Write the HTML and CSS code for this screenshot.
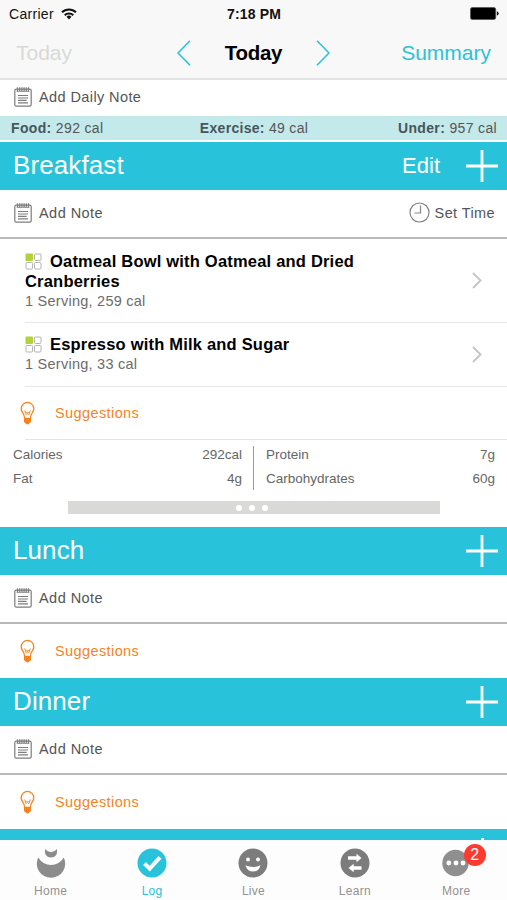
FILE: index.html
```html
<!DOCTYPE html>
<html lang="en">
<head>
<meta charset="utf-8">
<title>Food Log</title>
<link rel="stylesheet" href="styles.css">
</head>
<body>
<svg class="defs" aria-hidden="true">
  <symbol id="note" viewBox="0 0 18 20">
    <rect x=".8" y="2.2" width="16.4" height="17" rx="1.6" fill="none" stroke="currentColor" stroke-width="1.2"/>
    <path d="M2.6 4.3h12.8" stroke="currentColor" stroke-width=".9"/>
    <path d="M3.5.3v4M5.7.3v4M7.9.3v4M10.1.3v4M12.3.3v4M14.5.3v4" stroke="currentColor" stroke-width="1.2"/>
    <path d="M4 8.5h10M4 11h10M4 13.4h8.6M4 15.8h10" stroke="currentColor" stroke-width="1.2"/>
  </symbol>
  <symbol id="bulb" viewBox="0 0 15 24">
    <path d="M4.600 17.500C4.600 14.500 3.900 13.600 2.600 11.700A6.300 6.300 0 1 1 12.400 11.700C11.100 13.600 10.400 14.500 10.400 17.500z" fill="none" stroke="currentColor" stroke-width="1.300"/>
    <path d="M4.700 9.500l1.600 4.500M10.300 9.500l-1.600 4.500M6.600 11l.9 1.700.9-1.700" fill="none" stroke="currentColor" stroke-width="1"/>
    <path d="M4 17h7v3.700q0 1-1.300 1.400-.5 1.300-2.200 1.300t-2.200-1.300Q4 21.700 4 20.700z" fill="currentColor"/>
  </symbol>
  <symbol id="plus" viewBox="0 0 32 32">
    <path d="M0 16h32M16 0v32" stroke="currentColor" stroke-width="2.800"/>
  </symbol>
  <symbol id="squares" viewBox="0 0 17 17">
    <rect x=".5" y=".5" width="7.500" height="7.500" rx="1" fill="#b2d235"/>
    <g fill="none" stroke="#b4b4b4"><rect x="9.500" y="1" width="6.500" height="6.500" rx="1"/><rect x="1" y="9.500" width="6.500" height="6.500" rx="1"/><rect x="9.500" y="9.500" width="6.500" height="6.500" rx="1"/></g>
  </symbol>
  <symbol id="chevron" viewBox="0 0 10 17">
    <path d="M1 1l7.600 7.500L1 16" fill="none" stroke="currentColor" stroke-width="1.800"/>
  </symbol>
</svg>
<div class="screen">
  <header class="top">
    <div class="status">
      <div class="carrier"><span>Carrier</span>
        <svg width="16" height="12" viewBox="0 0 16 12"><g fill="none" stroke="#111" stroke-width="2"><path d="M1 4.300a10 10 0 0 1 14 0"/><path d="M3.700 7.200a6.100 6.100 0 0 1 8.600 0"/></g><path d="M5.500 8.800a3.500 3.500 0 0 1 5 0L8 11.500z" fill="#111"/></svg>
      </div>
      <b class="clock">7:18 PM</b>
      <svg class="battery" width="29" height="13" viewBox="0 0 31 13" preserveAspectRatio="none"><rect x=".5" y=".5" width="27" height="12" rx="2" fill="#000" stroke="#555" stroke-width=".8"/><path d="M28.700 4.300q2 .7 2 2.200t-2 2.200z" fill="#111"/></svg>
    </div>
    <nav class="nav">
      <span class="nav-left">Today</span>
      <div class="nav-title">
        <svg width="14" height="26" viewBox="0 0 14 26"><path d="M13 .8L1 13l12 12.200" fill="none" stroke="#28c3da" stroke-width="1.600"/></svg>
        <b>Today</b>
        <svg width="14" height="26" viewBox="0 0 14 26"><path d="M1 .8L13 13 1 25.200" fill="none" stroke="#28c3da" stroke-width="1.600"/></svg>
      </div>
      <span class="nav-right">Summary</span>
    </nav>
  </header>

  <div class="note daily"><svg class="note-icon"><use href="#note"/></svg><span class="daily-text">Add Daily Note</span></div>
  <div class="totals"><span><b>Food:</b> 292 cal</span><span><b>Exercise:</b> 49 cal</span><span><b>Under:</b> 957 cal</span></div>

  <section class="meal breakfast">
    <h2 class="band"><span class="meal-name">Breakfast</span><span class="edit">Edit</span><svg class="plus"><use href="#plus"/></svg></h2>
    <div class="note"><svg class="note-icon"><use href="#note"/></svg><span>Add Note</span>
      <svg class="time-icon" width="21" height="21" viewBox="0 0 21 21"><g fill="none" stroke="#858585" stroke-width="1.200"><circle cx="10.500" cy="10.500" r="9.500"/><path d="M11.500 3.500v7.500H5.500"/></g></svg><span class="time-text">Set Time</span>
    </div>
    <div class="food food-long">
      <div class="food-text"><b><svg class="squares"><use href="#squares"/></svg>Oatmeal Bowl with Oatmeal and Dried<br>Cranberries</b><span>1 Serving, 259 cal</span></div>
      <svg class="chevron"><use href="#chevron"/></svg>
    </div>
    <div class="food">
      <div class="food-text"><b><svg class="squares"><use href="#squares"/></svg>Espresso with Milk and Sugar</b><span>1 Serving, 33 cal</span></div>
      <svg class="chevron"><use href="#chevron"/></svg>
    </div>
    <div class="suggest"><svg class="bulb"><use href="#bulb"/></svg><span>Suggestions</span></div>
    <div class="nutrients">
      <div class="nutrient-col"><span>Calories</span><span>292cal</span><span>Fat</span><span>4g</span></div>
      <div class="nutrient-col"><span>Protein</span><span>7g</span><span>Carbohydrates</span><span>60g</span></div>
    </div>
    <div class="pager"><i></i><i></i><i></i></div>
  </section>

  <section class="meal">
    <h2 class="band"><span class="meal-name">Lunch</span><svg class="plus"><use href="#plus"/></svg></h2>
    <div class="note"><svg class="note-icon"><use href="#note"/></svg><span>Add Note</span></div>
    <div class="suggest"><svg class="bulb"><use href="#bulb"/></svg><span>Suggestions</span></div>
  </section>

  <section class="meal">
    <h2 class="band"><span class="meal-name">Dinner</span><svg class="plus"><use href="#plus"/></svg></h2>
    <div class="note"><svg class="note-icon"><use href="#note"/></svg><span>Add Note</span></div>
    <div class="suggest"><svg class="bulb"><use href="#bulb"/></svg><span>Suggestions</span></div>
  </section>

  <div class="next-band"><i></i></div>

  <footer class="tabs">
    <div class="tab">
      <svg width="30" height="30" viewBox="0 0 30 30" fill="#8c8c8c"><path d="M2.200 9.500Q7 17 15 17T27.800 9.500A14.200 14.200 0 1 1 2.200 9.500z"/><path d="M9 1q2.600 3.200 6 3.200T21 1q1 8.600-6 8.600T9 1z"/></svg>
      <span>Home</span>
    </div>
    <div class="tab active">
      <svg width="30" height="30" viewBox="0 0 30 30"><circle cx="15" cy="15" r="14.500" fill="#28c3da"/><path d="M7.500 15.500l5.200 5.200L23 9.300" fill="none" stroke="#fff" stroke-width="4"/></svg>
      <span>Log</span>
    </div>
    <div class="tab">
      <svg width="30" height="30" viewBox="0 0 30 30"><circle cx="15" cy="15" r="14.500" fill="#7c7c7c"/><g fill="#fff"><circle cx="10" cy="11.500" r="1.900"/><circle cx="20" cy="11.500" r="1.900"/><path d="M7.500 17.200q7.500 3.600 15 0-1.500 6.300-7.500 6.300t-7.500-6.300z"/></g></svg>
      <span>Live</span>
    </div>
    <div class="tab">
      <svg width="30" height="30" viewBox="0 0 30 30"><circle cx="15" cy="15" r="14.500" fill="#7c7c7c"/><path d="M8 8.300h8.500V5.800l5 4.200-5 4.200v-2.500H8zM21.500 18.300h-7.800v-2.500l-5.200 4.200 5.200 4.200v-2.500h7.800z" fill="#fff"/></svg>
      <span>Learn</span>
    </div>
    <div class="tab more">
      <svg width="30" height="30" viewBox="0 0 30 30"><circle cx="14.500" cy="15" r="13.200" fill="#8f8f8f"/><g fill="#fff"><circle cx="7.800" cy="15" r="2.400"/><circle cx="15" cy="15" r="2.400"/><circle cx="22" cy="15" r="2.400"/></g></svg>
      <span>More</span><em class="badge">2</em>
    </div>
  </footer>
</div>
</body>
</html>
```
FILE: styles.css
```css
* { box-sizing: border-box; }
body { margin: 0; font-family: "Liberation Sans", Arial, sans-serif; color: #555; background: #fff; }
svg { display: block; flex: none; }
.defs { position: absolute; width: 0; height: 0; }
.screen { width: 507px; height: 900px; overflow: hidden; display: flex; flex-direction: column; }

.top { height: 80px; flex: none; background: #f8f8f8; border-bottom: 2px solid #e2e2e2; }
.status { height: 27px; padding: 0 8px 0 9px; display: grid; grid-template-columns: 1fr auto 1fr; align-items: center; font-size: 14px; color: #111; }
.carrier { display: flex; gap: 7px; align-items: center; letter-spacing: .3px; }
.clock { letter-spacing: .15px; }
.battery { justify-self: end; }
.nav { height: 51px; padding: 0 16px; display: grid; grid-template-columns: 1fr auto 1fr; align-items: center; font-size: 21px; }
.nav-left { color: #d9d9d9; }
.nav-right { color: #28c3da; text-align: right; }
.nav-title { display: flex; align-items: center; justify-content: space-between; width: 154px; color: #000; }
.nav-title b { font-size: 20.5px; letter-spacing: -.3px; }

.note { height: 49px; flex: none; display: flex; align-items: center; padding: 0 12px 2px 14px; border-bottom: 2px solid #b9b9b9; font-size: 14.5px; letter-spacing: .45px; }
.daily { height: 36px; border-bottom: 0; padding-bottom: 2px; }
.daily-text { letter-spacing: .4px; }
.time-text { letter-spacing: .4px; }
.note-icon { width: 18px; height: 20px; margin-right: 7px; color: #7c7c7c; }
.time-icon { margin: 0 5px 0 auto; }
.totals { height: 24px; flex: none; padding: 0 10px 0 11px; display: grid; grid-template-columns: 1fr auto 1fr; align-items: center; background: #c3e9eb; font-size: 14px; letter-spacing: .35px; }
.totals span:nth-child(2) { letter-spacing: .3px; }
.totals span:last-child { text-align: right; }
.totals b { color: #46565c; }

.meal { height: 151px; flex: none; }
.breakfast { padding-top: 2px; height: 387px; }
.band { height: 48px; margin: 0; padding: 0 9px 0 13px; display: flex; align-items: center; background: #28c3da; color: #fff; font-weight: 400; }
.meal-name { font-size: 26px; flex: 1; padding-bottom: 1px; letter-spacing: .1px; }
.edit { font-size: 22px; margin-right: 26px; }
.plus { width: 32px; height: 32px; }

.food { height: 64px; margin-left: 25px; padding: 0 25px 1px 0; display: flex; align-items: center; justify-content: space-between; border-bottom: 1px solid #e6e6e6; }
.food-long { height: 84px; padding-bottom: 0; }
.food-text { display: flex; flex-direction: column; }
.food b { font-size: 16.500px; line-height: 20px; letter-spacing: .2px; color: #000; }
.food span { font-size: 14.500px; line-height: 20px; letter-spacing: .25px; color: #6c6c6c; }
.squares { display: inline-block; width: 17px; height: 17px; margin-right: 8px; vertical-align: -3px; }
.chevron { width: 10px; height: 17px; color: #c4c4c4; }

.suggest { height: 54px; padding-left: 20px; display: flex; align-items: center; gap: 20px; color: #f5841f; font-size: 14.500px; letter-spacing: .4px; }
.bulb { width: 15px; height: 24px; }
.breakfast .suggest { height: 53px; margin-left: 25px; padding-left: 0; border-bottom: 1px solid #e4e4e4; }
.breakfast .bulb { margin-left: -5px; }

.nutrients { height: 50px; padding: 6px 12px 0 13px; display: grid; grid-template-columns: 241px 1fr; font-size: 13.500px; color: #666; }
.nutrient-col { height: 44px; display: grid; grid-template-columns: 1fr auto; grid-template-rows: 24px 20px; line-height: 18px; }
.nutrient-col span:nth-child(even) { text-align: right; }
.nutrient-col:first-child { padding-right: 11px; border-right: 1.500px solid #999; }
.nutrient-col:last-child { padding-left: 12px; }
.pager { width: 372px; height: 13px; margin: 11px 0 0 68px; padding-right: 4px; display: flex; align-items: center; justify-content: center; gap: 7px; background: #d9d9d8; }
.pager i { width: 6px; height: 6px; border-radius: 50%; background: #fff; }

.next-band { height: 11px; flex: none; background: #28c3da; display: flex; justify-content: flex-end; align-items: flex-end; padding-right: 23px; }
.next-band i { width: 3px; height: 2px; background: #fff; }

.tabs { height: 60px; flex: none; display: grid; grid-template-columns: repeat(5, 1fr); background: #fdfdfd; }
.tab { position: relative; display: flex; flex-direction: column; align-items: center; padding-top: 8px; gap: 6px; font-size: 12px; line-height: 15px; letter-spacing: .3px; color: #929292; }
.active { color: #28c3da; }
.badge { position: absolute; left: 58px; top: 4px; width: 22px; height: 22px; border-radius: 50%; background: #fc3b30; color: #fff; font: 16px/22px "Liberation Sans", Arial, sans-serif; text-align: center; letter-spacing: 0; }
```
